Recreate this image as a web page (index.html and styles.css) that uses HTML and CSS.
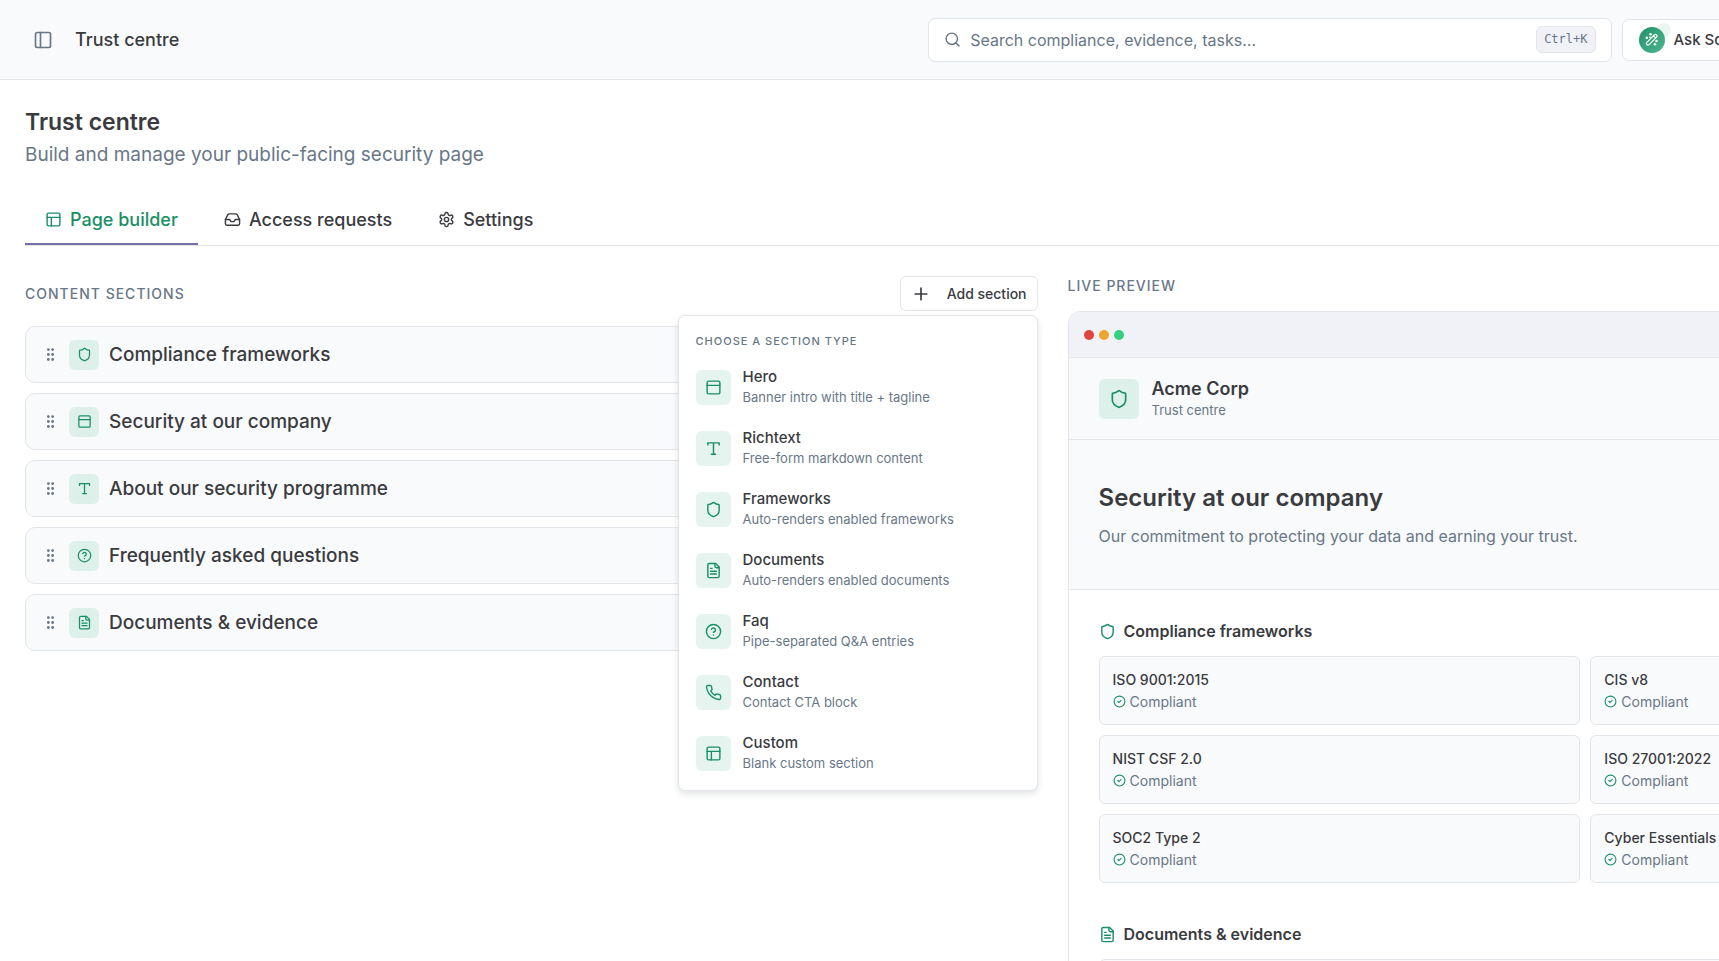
FILE: index.html
```html
<!DOCTYPE html>
<html lang="en">
<head>
    <meta charset="UTF-8">
    <meta name="viewport" content="width=device-width, initial-scale=1.0">
    <title>Trust centre</title>
    <link rel="stylesheet" href="styles.css">
</head>
<body>
    <svg class="sprite" aria-hidden="true">
        <symbol id="i-sidebar" viewBox="0 0 24 24"><rect x="3" y="3" width="18" height="18" rx="2"/><path d="M9 3v18"/></symbol>
        <symbol id="i-search" viewBox="0 0 24 24"><circle cx="11" cy="11" r="8"/><path d="m21 21-4.3-4.3"/></symbol>
        <symbol id="i-wand" viewBox="0 0 24 24"><rect x="1" y="10" width="22" height="5" rx="2.5" transform="rotate(-45 12 12)"/><path d="M15 6l3 3"/><g fill="currentColor" stroke="none"><circle cx="4.500" cy="9" r="2"/><circle cx="10.500" cy="3.500" r="2"/><circle cx="9.500" cy="8.500" r="1.500"/><circle cx="20" cy="14.500" r="2"/><circle cx="17.500" cy="19.500" r="2"/></g></symbol>
        <symbol id="i-layout" viewBox="0 0 24 24"><rect x="3" y="3" width="18" height="18" rx="2"/><path d="M3 9h18M9 21V9"/></symbol>
        <symbol id="i-inbox" viewBox="0 0 24 24"><path d="M22 12h-6l-2 3h-4l-2-3H2"/><path d="M5.45 5.11 2 12v6a2 2 0 0 0 2 2h16a2 2 0 0 0 2-2v-6l-3.45-6.89A2 2 0 0 0 16.76 4H7.24a2 2 0 0 0-1.79 1.11z"/></symbol>
        <symbol id="i-settings" viewBox="0 0 24 24"><path d="M12.22 2h-.44a2 2 0 0 0-2 2v.18a2 2 0 0 1-1 1.73l-.43.25a2 2 0 0 1-2 0l-.15-.08a2 2 0 0 0-2.73.73l-.22.38a2 2 0 0 0 .73 2.73l.15.1a2 2 0 0 1 1 1.72v.51a2 2 0 0 1-1 1.74l-.15.09a2 2 0 0 0-.73 2.73l.22.38a2 2 0 0 0 2.73.73l.15-.08a2 2 0 0 1 2 0l.43.25a2 2 0 0 1 1 1.73V20a2 2 0 0 0 2 2h.44a2 2 0 0 0 2-2v-.18a2 2 0 0 1 1-1.73l.43-.25a2 2 0 0 1 2 0l.15.08a2 2 0 0 0 2.73-.73l.22-.39a2 2 0 0 0-.73-2.73l-.15-.08a2 2 0 0 1-1-1.74v-.5a2 2 0 0 1 1-1.74l.15-.09a2 2 0 0 0 .73-2.73l-.22-.38a2 2 0 0 0-2.73-.73l-.15.08a2 2 0 0 1-2 0l-.43-.25a2 2 0 0 1-1-1.73V4a2 2 0 0 0-2-2z"/><circle cx="12" cy="12" r="3"/></symbol>
        <symbol id="i-plus" viewBox="0 0 24 24"><path d="M5 12h14M12 5v14"/></symbol>
        <symbol id="i-grip" viewBox="0 0 24 24"><circle cx="9" cy="5" r="1"/><circle cx="9" cy="12" r="1"/><circle cx="9" cy="19" r="1"/><circle cx="15" cy="5" r="1"/><circle cx="15" cy="12" r="1"/><circle cx="15" cy="19" r="1"/></symbol>
        <symbol id="i-shield" viewBox="0 0 24 24"><path d="M20 13c0 5-3.5 7.5-7.66 8.95a1 1 0 0 1-.67-.01C7.5 20.5 4 18 4 13V6a1 1 0 0 1 1-1c2 0 4.5-1.2 6.24-2.72a1.17 1.17 0 0 1 1.52 0C14.51 3.81 17 5 19 5a1 1 0 0 1 1 1z"/></symbol>
        <symbol id="i-hero" viewBox="0 0 24 24"><rect x="3" y="3" width="18" height="18" rx="2"/><path d="M3 9h18"/></symbol>
        <symbol id="i-type" viewBox="0 0 24 24"><path d="M4 7V4h16v3M9 20h6M12 4v16"/></symbol>
        <symbol id="i-help" viewBox="0 0 24 24"><circle cx="12" cy="12" r="10"/><path d="M9.09 9a3 3 0 0 1 5.83 1c0 2-3 3-3 3M12 17h.01"/></symbol>
        <symbol id="i-file" viewBox="0 0 24 24"><path d="M15 2H6a2 2 0 0 0-2 2v16a2 2 0 0 0 2 2h12a2 2 0 0 0 2-2V7z"/><path d="M14 2v4a2 2 0 0 0 2 2h4M10 9H8M16 13H8M16 17H8"/></symbol>
        <symbol id="i-phone" viewBox="0 0 24 24"><path d="M22 16.92v3a2 2 0 0 1-2.18 2 19.79 19.79 0 0 1-8.63-3.07 19.5 19.5 0 0 1-6-6 19.79 19.79 0 0 1-3.07-8.67A2 2 0 0 1 4.11 2h3a2 2 0 0 1 2 1.72 12.84 12.84 0 0 0 .7 2.81 2 2 0 0 1-.45 2.11L8.09 9.91a16 16 0 0 0 6 6l1.27-1.27a2 2 0 0 1 2.11-.45 12.84 12.84 0 0 0 2.81.7A2 2 0 0 1 22 16.92z"/></symbol>
        <symbol id="i-check" viewBox="0 0 24 24"><circle cx="12" cy="12" r="10"/><path d="m9 12 2 2 4-4"/></symbol>
    </svg>

    <div class="shell">
        <header class="topbar">
            <div class="brand">
                <button class="icon-btn" aria-label="Toggle sidebar"><svg class="icon icon-lg"><use href="#i-sidebar"/></svg></button>
                <span class="brand-title">Trust centre</span>
            </div>
            <label class="search">
                <svg class="icon"><use href="#i-search"/></svg>
                <input type="search" aria-label="Search" placeholder="Search compliance, evidence, tasks…">
                <kbd>Ctrl+K</kbd>
            </label>
            <button class="ask">
                <span class="ask-badge"><svg class="icon"><use href="#i-wand"/></svg></span>
                Ask Scout
            </button>
        </header>

        <main class="page">
            <h1>Trust centre</h1>
            <p class="subtitle">Build and manage your public-facing security page</p>

            <nav class="tabs">
                <a href="#builder" class="tab active"><svg class="icon"><use href="#i-layout"/></svg>Page builder</a>
                <a href="#requests" class="tab"><svg class="icon"><use href="#i-inbox"/></svg>Access requests</a>
                <a href="#settings" class="tab"><svg class="icon"><use href="#i-settings"/></svg>Settings</a>
            </nav>

            <div class="columns">
                <section class="builder">
                    <div class="builder-head">
                        <h2 class="label">Content sections</h2>
                        <div class="add">
                            <button class="add-btn"><svg class="icon icon-lg"><use href="#i-plus"/></svg>Add section</button>
                            <div class="menu">
                                <p class="menu-label">Choose a section type</p>
                                <button class="menu-item">
                                    <span class="tile"><svg class="icon"><use href="#i-hero"/></svg></span>
                                    <span class="menu-text"><b>Hero</b><small>Banner intro with title + tagline</small></span>
                                </button>
                                <button class="menu-item">
                                    <span class="tile"><svg class="icon"><use href="#i-type"/></svg></span>
                                    <span class="menu-text"><b>Richtext</b><small>Free-form markdown content</small></span>
                                </button>
                                <button class="menu-item">
                                    <span class="tile"><svg class="icon"><use href="#i-shield"/></svg></span>
                                    <span class="menu-text"><b>Frameworks</b><small>Auto-renders enabled frameworks</small></span>
                                </button>
                                <button class="menu-item">
                                    <span class="tile"><svg class="icon"><use href="#i-file"/></svg></span>
                                    <span class="menu-text"><b>Documents</b><small>Auto-renders enabled documents</small></span>
                                </button>
                                <button class="menu-item">
                                    <span class="tile"><svg class="icon"><use href="#i-help"/></svg></span>
                                    <span class="menu-text"><b>Faq</b><small>Pipe-separated Q&amp;A entries</small></span>
                                </button>
                                <button class="menu-item">
                                    <span class="tile"><svg class="icon"><use href="#i-phone"/></svg></span>
                                    <span class="menu-text"><b>Contact</b><small>Contact CTA block</small></span>
                                </button>
                                <button class="menu-item">
                                    <span class="tile"><svg class="icon"><use href="#i-layout"/></svg></span>
                                    <span class="menu-text"><b>Custom</b><small>Blank custom section</small></span>
                                </button>
                            </div>
                        </div>
                    </div>
                    <ul class="sections">
                        <li><svg class="icon grip"><use href="#i-grip"/></svg><span class="tile tile-sm"><svg class="icon"><use href="#i-shield"/></svg></span>Compliance frameworks</li>
                        <li><svg class="icon grip"><use href="#i-grip"/></svg><span class="tile tile-sm"><svg class="icon"><use href="#i-hero"/></svg></span>Security at our company</li>
                        <li><svg class="icon grip"><use href="#i-grip"/></svg><span class="tile tile-sm"><svg class="icon"><use href="#i-type"/></svg></span>About our security programme</li>
                        <li><svg class="icon grip"><use href="#i-grip"/></svg><span class="tile tile-sm"><svg class="icon"><use href="#i-help"/></svg></span>Frequently asked questions</li>
                        <li><svg class="icon grip"><use href="#i-grip"/></svg><span class="tile tile-sm"><svg class="icon"><use href="#i-file"/></svg></span>Documents &amp; evidence</li>
                    </ul>
                </section>

                <section class="live">
                    <h2 class="label">Live preview</h2>
                    <div class="preview">
                        <div class="window-bar"><i class="dot red"></i><i class="dot amber"></i><i class="dot green"></i></div>
                        <div class="company">
                            <span class="tile tile-lg"><svg class="icon icon-lg"><use href="#i-shield"/></svg></span>
                            <div>
                                <p class="company-name">Acme Corp</p>
                                <p class="company-sub">Trust centre</p>
                            </div>
                        </div>
                        <div class="hero">
                            <h3>Security at our company</h3>
                            <p>Our commitment to protecting your data and earning your trust.</p>
                        </div>
                        <div class="block">
                            <h4><svg class="icon"><use href="#i-shield"/></svg>Compliance frameworks</h4>
                            <div class="frameworks">
                                <div class="framework">ISO 9001:2015<span><svg class="icon icon-sm"><use href="#i-check"/></svg>Compliant</span></div>
                                <div class="framework">CIS v8<span><svg class="icon icon-sm"><use href="#i-check"/></svg>Compliant</span></div>
                                <div class="framework">NIST CSF 2.0<span><svg class="icon icon-sm"><use href="#i-check"/></svg>Compliant</span></div>
                                <div class="framework">ISO 27001:2022<span><svg class="icon icon-sm"><use href="#i-check"/></svg>Compliant</span></div>
                                <div class="framework">SOC2 Type 2<span><svg class="icon icon-sm"><use href="#i-check"/></svg>Compliant</span></div>
                                <div class="framework">Cyber Essentials<span><svg class="icon icon-sm"><use href="#i-check"/></svg>Compliant</span></div>
                            </div>
                        </div>
                        <div class="block">
                            <h4><svg class="icon"><use href="#i-file"/></svg>Documents &amp; evidence</h4>
                            <div class="document"></div>
                        </div>
                    </div>
                </section>
            </div>
        </main>
    </div>
</body>
</html>
```

FILE: styles.css
```css
* {
    box-sizing: border-box;
}
html, body {
    height: 100%;
    margin: 0;
    overflow: hidden;
}
body {
    background: #fff;
    color: #3a3b3f;
    font-family: Inter, "Liberation Sans", sans-serif;
    font-size: 18px;
}
h1, h2, h3, h4, p, ul {
    margin: 0;
    padding: 0;
}
button, input {
    font: inherit;
    color: inherit;
}
button {
    border: none;
    background: none;
    padding: 0;
    cursor: pointer;
}
.sprite {
    display: none;
}
.icon {
    width: 17px;
    height: 17px;
    flex: none;
    fill: none;
    stroke: currentColor;
    stroke-width: 2;
    stroke-linecap: round;
    stroke-linejoin: round;
}
.icon-lg {
    width: 20px;
    height: 20px;
}
.icon-sm {
    width: 13px;
    height: 13px;
}

/* the workspace is wider than the window and is cut at its edge */
.shell {
    width: 123.8vw;
}

/* top bar */
.topbar {
    display: grid;
    grid-template-columns: 434fr 332fr 234fr;
    gap: 10px;
    align-items: center;
    height: 80px;
    padding: 0 25px;
    background: #f9fafc;
    border-bottom: 1px solid #e2e5e9;
}
.brand {
    display: flex;
    align-items: center;
    gap: 14px;
}
.icon-btn {
    display: flex;
    padding: 8px;
    color: #687787;
}
.brand-title {
    font-weight: 500;
}
.search {
    display: flex;
    align-items: center;
    gap: 9px;
    height: 44px;
    padding: 0 15px;
    background: #fff;
    border: 1px solid #e2e5e9;
    border-radius: 7px;
    color: #687787;
    font-size: 16px;
}
.search input {
    flex: 1;
    padding: 0;
    border: none;
    outline: none;
    background: none;
}
.search input::placeholder {
    color: #687787;
    opacity: 1;
}
.search kbd {
    padding: 0 7px;
    background: #f1f2f8;
    border: 1px solid #e2e5e9;
    border-radius: 6px;
    font-family: "DejaVu Sans Mono", monospace;
    font-size: 12px;
    line-height: 25px;
}
.ask {
    justify-self: start;
    display: flex;
    align-items: center;
    gap: 9px;
    height: 42px;
    padding: 0 16px;
    background: #fff;
    border: 1px solid #e2e5e9;
    border-radius: 7px;
    font-size: 15px;
    font-weight: 500;
    white-space: nowrap;
    isolation: isolate;
}
.ask-badge {
    position: relative;
    display: grid;
    place-items: center;
    width: 26px;
    height: 26px;
    border-radius: 50%;
    background: linear-gradient(135deg, #1f9268, #4fb592);
    color: #fff;
}
.ask-badge::after {
    content: "";
    position: absolute;
    top: -4px;
    right: -6px;
    z-index: -1;
    width: 14px;
    height: 14px;
    border-radius: 50%;
    background: #e9f6f2;
}
.ask-badge .icon {
    width: 15px;
    height: 15px;
}

/* page */
.page {
    padding: 26px 25px 0;
}
h1 {
    font-size: 23px;
    font-weight: 600;
    line-height: 32px;
}
.subtitle {
    margin-top: 3px;
    color: #687787;
    font-size: 19px;
    line-height: 28px;
}
.tabs {
    display: flex;
    gap: 6px;
    margin-top: 27px;
    border-bottom: 1px solid #e2e5e9;
}
.tab {
    display: flex;
    align-items: center;
    gap: 8px;
    height: 49px;
    padding: 0 20px;
    border-bottom: 2px solid transparent;
    color: inherit;
    font-weight: 500;
    text-decoration: none;
}
.tab.active {
    color: #1a8f66;
    border-bottom-color: #7470a8;
}
.columns {
    display: grid;
    grid-template-columns: 44fr 45fr;
    gap: 30px;
    padding-top: 30px;
}
.label {
    color: #687787;
    font-size: 14px;
    font-weight: 500;
    letter-spacing: 1px;
    line-height: 20px;
    text-transform: uppercase;
}

/* section list */
.builder-head {
    display: flex;
    align-items: center;
    justify-content: space-between;
    margin-bottom: 15px;
}
.add {
    position: relative;
}
.add-btn {
    display: flex;
    align-items: center;
    gap: 16px;
    height: 35px;
    padding: 0 10px;
    background: #fff;
    border: 1px solid #e2e5e9;
    border-radius: 6px;
    font-size: 14px;
    font-weight: 500;
}
.sections {
    display: grid;
    gap: 10px;
    list-style: none;
}
.sections li {
    display: flex;
    align-items: center;
    gap: 10px;
    height: 57px;
    padding: 0 16px;
    background: #f9fafc;
    border: 1px solid #e2e5e9;
    border-radius: 10px;
    font-size: 19px;
    font-weight: 500;
}
.grip {
    color: #687787;
}
.tile {
    display: grid;
    place-items: center;
    flex: none;
    width: 35px;
    height: 35px;
    border-radius: 6px;
    background: #e5f4ef;
    color: #1a8f66;
}
.tile-sm {
    width: 30px;
    height: 30px;
    background: #ddf0ea;
}
.tile-sm .icon {
    width: 15px;
    height: 15px;
}
.tile-lg {
    width: 40px;
    height: 40px;
    background: #ddf0ea;
}

/* section type menu */
.menu {
    position: absolute;
    top: 100%;
    right: 0;
    z-index: 10;
    width: 360px;
    margin-top: 4px;
    padding: 15px 7px 6px;
    background: #fff;
    border: 1px solid #e2e5e9;
    border-radius: 7px;
    box-shadow: 0 3px 6px rgba(20, 30, 50, .12);
}
.menu-label {
    margin-bottom: 6px;
    padding: 0 10px;
    color: #687787;
    font-size: 11px;
    font-weight: 500;
    letter-spacing: 1px;
    line-height: 20px;
    text-transform: uppercase;
}
.menu-item {
    display: flex;
    align-items: center;
    gap: 12px;
    width: 100%;
    height: 61px;
    padding: 0 10px;
    text-align: left;
}
.menu-text {
    display: grid;
    padding-bottom: 4px;
}
.menu-text b {
    font-size: 15px;
    font-weight: 500;
    line-height: 22px;
}
.menu-text small {
    color: #687787;
    font-size: 13px;
    line-height: 18px;
}

/* live preview */
.preview {
    margin-top: 15px;
    border: 1px solid #e2e5e9;
    border-radius: 12px;
    overflow: hidden;
}
.window-bar {
    display: flex;
    align-items: center;
    gap: 5px;
    height: 46px;
    padding: 0 15px;
    background: #f1f2f8;
    border-bottom: 1px solid #e2e5e9;
}
.dot {
    width: 10px;
    height: 10px;
    border-radius: 50%;
}
.red {
    background: #e0443e;
}
.amber {
    background: #eda52c;
}
.green {
    background: #35cf7f;
}
.company {
    display: flex;
    align-items: center;
    gap: 13px;
    height: 82px;
    padding: 0 30px;
    background: #f9fafc;
    border-bottom: 1px solid #e2e5e9;
}
.company-name {
    font-weight: 600;
    line-height: 22px;
}
.company-sub {
    color: #687787;
    font-size: 13px;
    line-height: 20px;
}
.hero {
    padding: 40px 30px;
    background: #f9fafc;
    border-bottom: 1px solid #e2e5e9;
}
.hero h3 {
    font-size: 24px;
    font-weight: 600;
    line-height: 35px;
}
.hero p {
    margin-top: 9px;
    color: #687787;
    font-size: 16px;
    line-height: 25px;
}
.block {
    padding: 30px 30px 10px;
}
.block h4 {
    display: flex;
    align-items: center;
    gap: 8px;
    margin-bottom: 14px;
    font-size: 16px;
    font-weight: 600;
    line-height: 22px;
}
.block h4 .icon {
    color: #1a8f66;
}
.frameworks {
    display: grid;
    grid-template-columns: 1fr 1fr;
    gap: 10px;
}
.framework {
    display: grid;
    align-content: center;
    height: 69px;
    padding: 0 13px;
    background: #f9fafc;
    border: 1px solid #e2e5e9;
    border-radius: 6px;
    font-size: 14px;
    font-weight: 500;
    line-height: 22px;
}
.framework span {
    display: flex;
    align-items: center;
    gap: 4px;
    color: #687787;
    font-weight: 400;
}
.framework .icon {
    color: #1a8f66;
}
.document {
    height: 60px;
    background: #f9fafc;
    border: 1px solid #e2e5e9;
    border-radius: 6px;
}
```
